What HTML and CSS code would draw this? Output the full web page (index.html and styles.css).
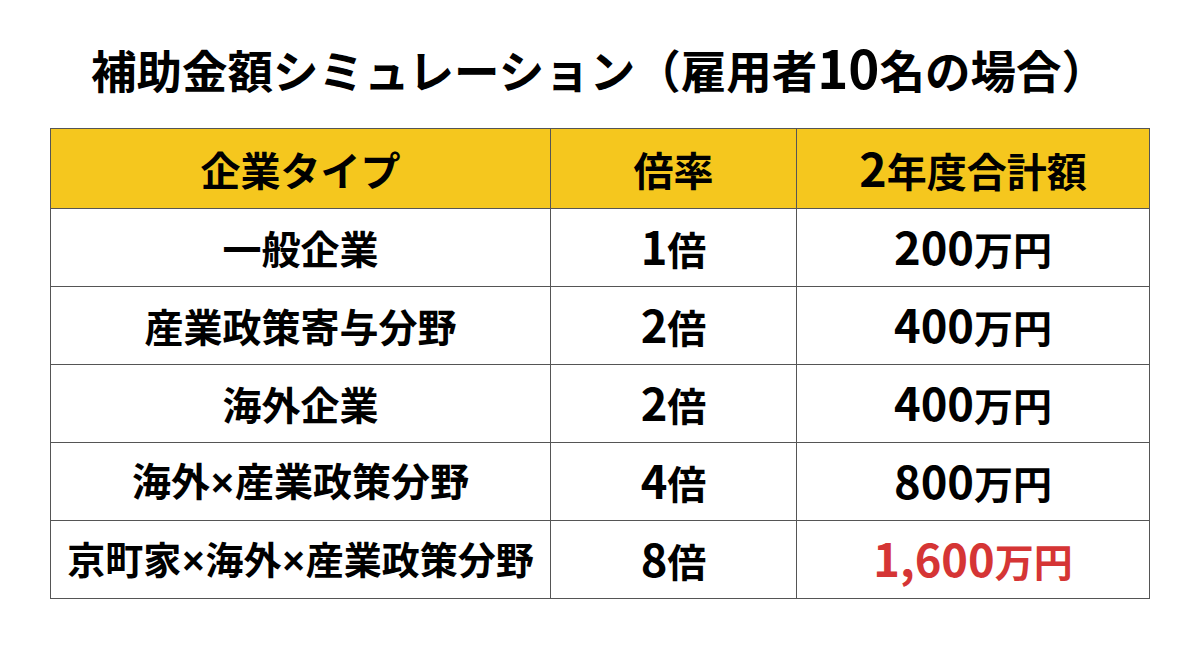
FILE: index.html
```html
<!DOCTYPE html>
<html lang="ja">
<head>
<meta charset="utf-8">
<link rel="stylesheet" href="styles.css">
</head>
<body>
<div class="page">
  <h1 class="title">補助金額シミュレーション（雇用者<span class="num">10</span>名の場合）</h1>
  <table class="sim">
    <colgroup>
      <col class="c1"><col class="c2"><col class="c3">
    </colgroup>
    <thead>
      <tr><th>企業タイプ</th><th>倍率</th><th><span class="num">2</span>年度合計額</th></tr>
    </thead>
    <tbody>
      <tr><td>一般企業</td><td><span class="num">1</span>倍</td><td><span class="num">200</span>万円</td></tr>
      <tr><td>産業政策寄与分野</td><td><span class="num">2</span>倍</td><td><span class="num">400</span>万円</td></tr>
      <tr><td>海外企業</td><td><span class="num">2</span>倍</td><td><span class="num">400</span>万円</td></tr>
      <tr><td>海外<span class="x">×</span>産業政策分野</td><td><span class="num">4</span>倍</td><td><span class="num">800</span>万円</td></tr>
      <tr><td class="long">京町家<span class="x">×</span>海外<span class="x">×</span>産業政策分野</td><td><span class="num">8</span>倍</td><td class="red"><span class="num">1,600</span>万円</td></tr>
    </tbody>
  </table>
</div>
</body>
</html>
```

FILE: styles.css
```css
html, body {
  margin: 0;
  padding: 0;
  background: #ffffff;
}
body {
  font-family: "Noto Sans CJK JP", "Noto Sans", sans-serif;
  color: #000;
}
.page {
  width: 1200px;
  height: 655px;
  display: flex;
  flex-direction: column;
  align-items: center;
}
.title {
  margin: 39px 0 0 0;
  font-size: 45.5px;
  font-weight: 700;
  line-height: 61px;
  text-indent: -2px;
}
.num {
  font-size: 1.16em;
  line-height: 1;
}
.x {
  font-family: "Liberation Sans", sans-serif;
  font-weight: 700;
  padding: 0 1px;
}
.sim {
  margin-top: 28px;
  border-collapse: collapse;
  width: 1099px;
  table-layout: fixed;
}
.c1 { width: 500px; }
.c2 { width: 246px; }
.c3 { width: 353px; }
.sim th, .sim td {
  border: 1px solid #555;
  text-align: center;
  vertical-align: middle;
  font-weight: 700;
  padding: 0;
  line-height: 1.2;
}
.sim th {
  background: #f5c71e;
  height: 79px;
  font-size: 40px;
}
.sim td {
  height: 77px;
  font-size: 39px;
}
.sim td.long {
  font-size: 38px;
}
.sim td.red {
  color: #d53535;
}
```
